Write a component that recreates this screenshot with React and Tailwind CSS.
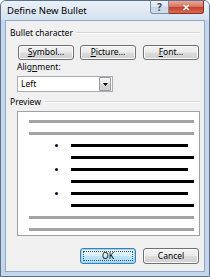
import React from "react";

const btn =
  "h-[15px] w-[56px] rounded-[3px] border border-[#707070] bg-[linear-gradient(#f3f3f3_0%,#ebebeb_48%,#dddddd_52%,#cfcfcf_100%)] shadow-[inset_0_0_0_1px_#fbfbfb] flex items-center justify-center text-[8.5px] leading-none text-black";

function Line({ bullet, long, gray }) {
  if (gray) {
    return (
      <div className="h-[12px] flex items-center pl-[11px]">
        <div className="h-[3px] w-[165px] bg-[#a3a3a3]" />
      </div>
    );
  }
  return (
    <div className="h-[12px] flex items-center pl-[37px]">
      <div className="w-[16px] flex items-center">
        {bullet && <div className="w-[3px] h-[3px] rounded-full bg-[#0a0f2a]" />}
      </div>
      <div className={`h-[3px] bg-black ${long ? "w-[123px]" : "w-[117px]"}`} />
    </div>
  );
}

export default function App() {
  return (
    <div
      className="w-[210px] h-[277px] flex flex-col bg-[#c4d6eb] border border-[#5f7189] rounded-t-[6px] overflow-hidden"
      style={{ fontFamily: '"Noto Sans", "Liberation Sans", sans-serif' }}
    >
      {/* Title bar */}
      <div className="h-[19px] flex items-start justify-between bg-[linear-gradient(#e9f0f8,#d6e2f0)]">
        <div className="pl-[6px] pt-[4px] text-[9.5px] leading-[12px] text-black">
          Define New Bullet
        </div>
        <div className="flex mr-[5px]">
          <div className="w-[19px] h-[13px] rounded-bl-[3px] border border-[#7b8ca3] border-t-0 bg-[linear-gradient(#eef3f8_0%,#dae3ee_50%,#c6d3e3_52%,#d4dfec_100%)] flex items-center justify-center text-[10px] font-bold leading-none text-[#3d4a5c]">
            ?
          </div>
          <div className="w-[35px] h-[13px] rounded-br-[3px] border border-l-0 border-t-0 border-[#8d2e22] bg-[linear-gradient(#e9a898_0%,#d9725f_48%,#c4402c_52%,#d86b52_100%)] flex items-center justify-center text-[10px] font-bold leading-none text-white [text-shadow:0_0_1px_#5a1a10]">
            ✕
          </div>
        </div>
      </div>

      {/* Content */}
      <div className="flex-1 mx-[4px] mb-[4px] border border-[#8ea7c6] bg-[#f0f0f0] flex flex-col text-[8.5px] text-black">
        {/* Bullet character group */}
        <div className="mt-[7px] h-[10px] flex items-center pl-[4px] pr-[4px]">
          <span className="leading-none">Bullet character</span>
          <div className="flex-1 ml-[3px] border-t border-[#d7d7d7] border-b-white h-0 [border-bottom-width:1px]" />
        </div>
        <div className="mt-[7px] flex pl-[12px]">
          <div className={btn}>
            <span><u>S</u>ymbol...</span>
          </div>
          <div className={`${btn} ml-[6px]`}>
            <span><u>P</u>icture...</span>
          </div>
          <div className={`${btn} ml-[7px]`}>
            <span><u>F</u>ont...</span>
          </div>
        </div>

        {/* Alignment */}
        <div className="mt-[2px] h-[10px] flex items-center pl-[11px]">
          <span className="leading-none">
            Alig<u>n</u>ment:
          </span>
        </div>
        <div className="mt-[4px] ml-[11px] w-[96px] h-[16px] border border-[#abadb3] bg-white flex items-center">
          <span className="flex-1 pl-[3px] leading-none">Left</span>
          <div className="w-[12px] h-[14px] mr-[1px] border border-[#9a9a9a] rounded-[1px] bg-[linear-gradient(#f6f6f6_0%,#e8e8e8_50%,#d8d8d8_52%,#d0d0d0_100%)] flex items-center justify-center">
            <svg width="5" height="3" viewBox="0 0 5 3">
              <path d="M0 0H5L2.5 3Z" fill="#000" />
            </svg>
          </div>
        </div>

        {/* Preview */}
        <div className="mt-[5px] h-[10px] flex items-center pl-[4px] pr-[4px]">
          <span className="leading-none">Preview</span>
          <div className="flex-1 ml-[4px] border-t border-[#d7d7d7] border-b-white h-0 [border-bottom-width:1px]" />
        </div>
        <div className="mt-[4px] ml-[11px] w-[183px] h-[125px] border border-[#a0a0a0] bg-white pt-[3px]">
          <Line gray />
          <Line gray />
          <Line bullet />
          <Line long />
          <Line bullet />
          <Line long />
          <Line bullet />
          <Line long />
          <Line gray />
          <Line gray />
        </div>

        {/* Buttons */}
        <div className="mt-[12px] flex pl-[74px]">
          <div className="h-[16px] w-[56px] rounded-[3px] border border-[#3c7fb1] bg-[linear-gradient(#eaf6fd_0%,#d9f0fc_48%,#bee6fd_52%,#a7d9f5_100%)] shadow-[inset_0_0_0_1px_#94d4f6] flex items-center justify-center p-[2px]">
            <div className="w-full h-full border border-dotted border-[#555] flex items-center justify-center leading-none text-[8.5px]">
              OK
            </div>
          </div>
          <div className="h-[16px] w-[56px] ml-[7px] rounded-[3px] border border-[#707070] bg-[linear-gradient(#f3f3f3_0%,#ebebeb_48%,#dddddd_52%,#cfcfcf_100%)] shadow-[inset_0_0_0_1px_#fbfbfb] flex items-center justify-center text-[8.5px] leading-none">
            Cancel
          </div>
        </div>
      </div>
    </div>
  );
}
